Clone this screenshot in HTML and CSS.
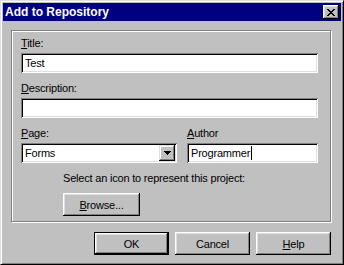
FILE: index.html
```html
<!DOCTYPE html>
<html lang="en">
<head>
    <meta charset="UTF-8">
    <title>Add to Repository</title>
    <link rel="stylesheet" href="styles.css">
</head>
<body>
    <div class="window">
        <div class="titlebar">
            <span class="title">Add to Repository</span>
            <span class="close">
                <svg width="8" height="7" viewBox="0 0 8 7" shape-rendering="crispEdges">
                    <path d="M0 0h2v1H0z M6 0h2v1H6z M1 1h2v1H1z M5 1h2v1H5z M2 2h4v1H2z M3 3h2v1H3z M2 4h4v1H2z M1 5h2v1H1z M5 5h2v1H5z M0 6h2v1H0z M6 6h2v1H6z" fill="#000"/>
                </svg>
            </span>
        </div>
        <div class="content">
            <div class="group">
                <div class="label"><u>T</u>itle:</div>
                <div class="field wide">Test</div>
                <div class="label"><u>D</u>escription:</div>
                <div class="field wide"></div>
                <div class="row">
                    <div class="col page">
                        <div class="label"><u>P</u>age:</div>
                        <div class="field combo">
                            <span class="combo-text">Forms</span>
                            <span class="combo-btn">
                                <svg width="7" height="4" viewBox="0 0 7 4" shape-rendering="crispEdges">
                                    <path d="M0 0h7v1H0z M1 1h5v1H1z M2 2h3v1H2z M3 3h1v1H3z" fill="#000"/>
                                </svg>
                            </span>
                        </div>
                    </div>
                    <div class="col author">
                        <div class="label"><u>A</u>uthor</div>
                        <div class="field">Programmer<span class="caret"></span></div>
                    </div>
                </div>
                <div class="icon-pick">
                    <div class="hint">Select an icon to represent this project:</div>
                    <div class="button browse"><u>B</u>rowse...</div>
                </div>
            </div>
            <div class="buttons">
                <div class="button default">OK</div>
                <div class="button">Cancel</div>
                <div class="button"><u>H</u>elp</div>
            </div>
        </div>
    </div>
</body>
</html>
```

FILE: styles.css
```css
body {
    margin: 0;
    background: #c0c0c0;
    font-family: "Liberation Sans", Arial, sans-serif;
    font-size: 11px;
    letter-spacing: -0.2px;
    color: #000;
}
.window {
    width: 344px;
    height: 265px;
    box-sizing: border-box;
    border: 1px solid;
    border-color: #dfdfdf #000 #000 #dfdfdf;
    box-shadow: inset 1px 1px #fff, inset -1px -1px #808080;
    padding: 2px;
    background: #c0c0c0;
}
.titlebar {
    height: 18px;
    background: #000080;
    display: flex;
    align-items: center;
    justify-content: space-between;
    padding: 0 2px 0 2px;
}
.title {
    color: #fff;
    font-weight: bold;
    font-size: 12px;
    letter-spacing: 0;
    line-height: 18px;
}
.close {
    width: 16px;
    height: 14px;
    background: #c0c0c0;
    box-shadow: inset -1px -1px #000, inset 1px 1px #fff, inset -2px -2px #808080, inset 2px 2px #dfdfdf;
    display: flex;
    align-items: center;
    justify-content: center;
}
.close svg {
    margin-left: -1px;
}
.content {
    padding: 9px 8px 0 8px;
}
.group {
    width: 320px;
    height: 192px;
    box-sizing: border-box;
    border: 1px solid #808080;
    box-shadow: inset 1px 1px #fff, 1px 1px #fff;
    padding: 6px 0 0 9px;
}
.label {
    line-height: 13px;
    height: 13px;
    margin-bottom: 3px;
}
.field {
    height: 20px;
    box-sizing: border-box;
    background: #fff;
    box-shadow: inset 1px 1px #808080, inset -1px -1px #fff, inset 2px 2px #000, inset -2px -2px #dfdfdf;
    padding: 0 3px 0 4px;
    line-height: 20px;
    margin-bottom: 9px;
    display: flex;
    align-items: center;
}
.wide {
    width: 297px;
}
.row {
    display: flex;
    gap: 10px;
}
.page {
    width: 156px;
}
.author {
    width: 131px;
}
.combo {
    padding-right: 2px;
    justify-content: space-between;
}
.combo-btn {
    width: 16px;
    height: 16px;
    background: #c0c0c0;
    box-shadow: inset -1px -1px #000, inset 1px 1px #dfdfdf, inset -2px -2px #808080, inset 2px 2px #fff;
    display: flex;
    align-items: center;
    justify-content: center;
}
.caret {
    width: 1px;
    height: 14px;
    background: #000;
    margin-left: 1px;
}
.icon-pick {
    padding-left: 42px;
}
.hint {
    line-height: 13px;
    margin-bottom: 8px;
}
.button {
    width: 75px;
    height: 23px;
    box-sizing: border-box;
    background: #c0c0c0;
    box-shadow: inset -1px -1px #000, inset 1px 1px #fff, inset -2px -2px #808080, inset 2px 2px #dfdfdf;
    display: flex;
    align-items: center;
    justify-content: center;
}
.browse {
    width: 77px;
}
.default {
    border: 1px solid #000;
}
.buttons {
    width: 320px;
    display: flex;
    justify-content: flex-end;
    gap: 6px;
    margin-top: 10px;
}
```
